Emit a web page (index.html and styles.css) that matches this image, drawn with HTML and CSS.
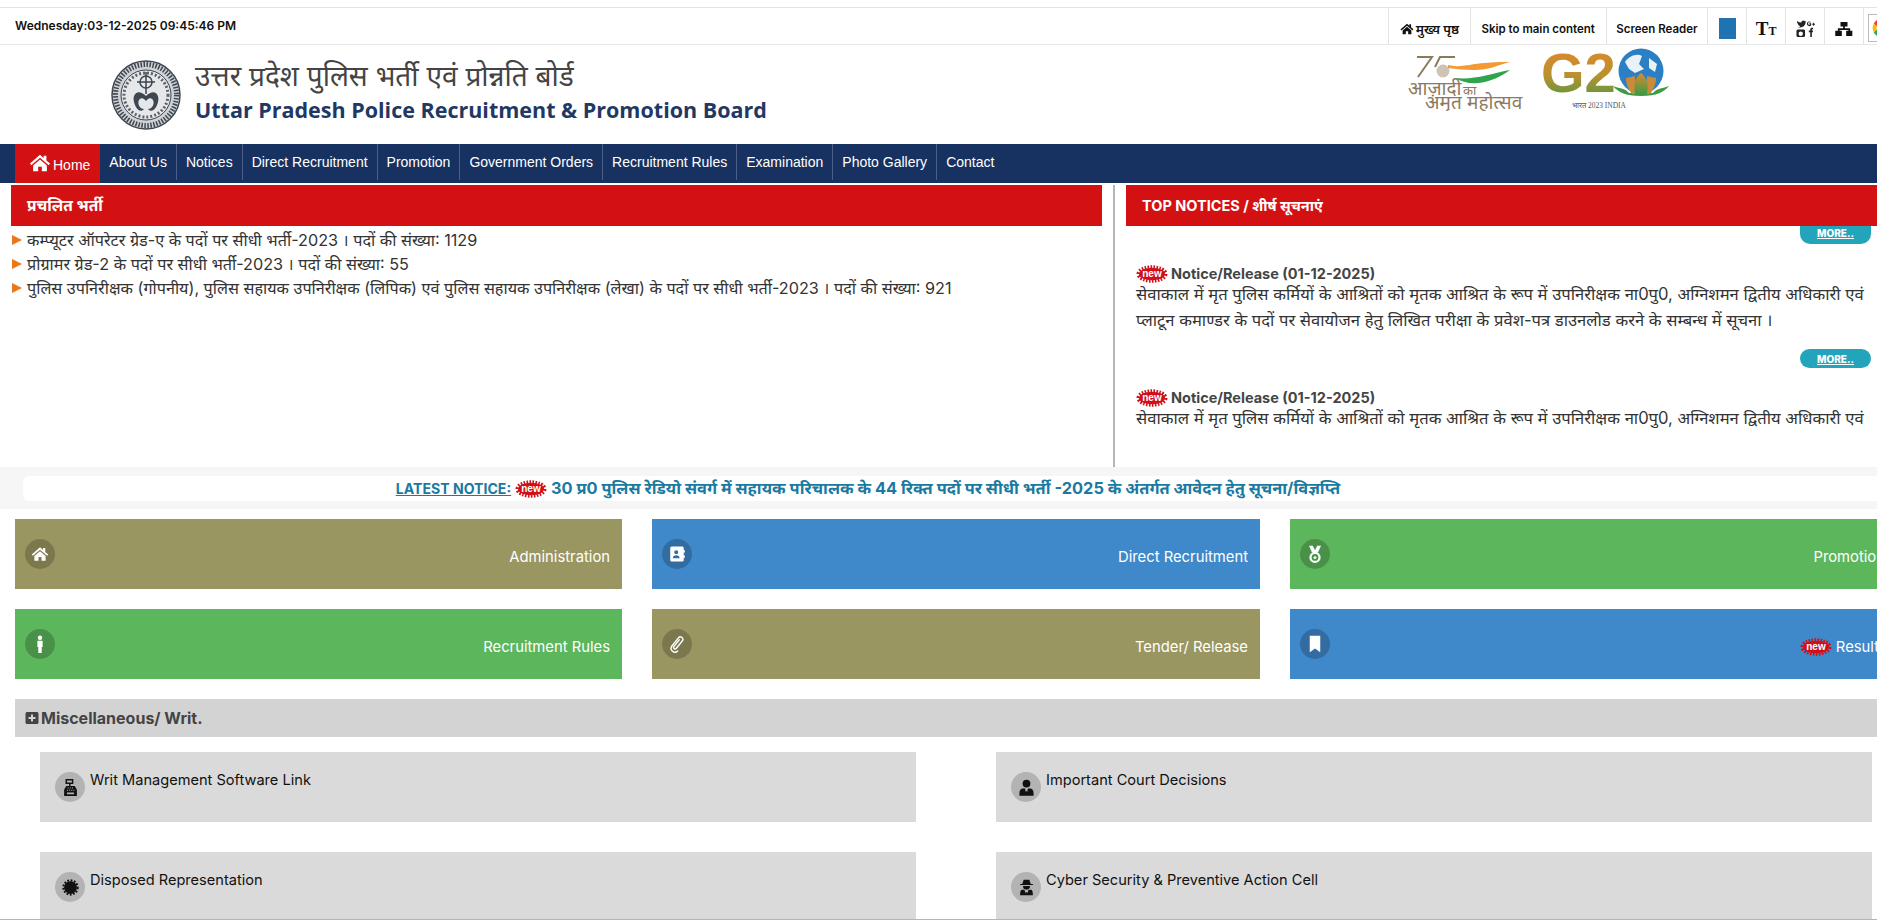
FILE: index.html
```html
<!DOCTYPE html>
<html lang="hi">
<head>
<meta charset="utf-8">
<title>UPPRPB</title>
<link rel="stylesheet" href="styles.css">
</head>
<body>
<svg class="defs" width="0" height="0" aria-hidden="true">
  <symbol id="i-home" viewBox="0 0 24 24"><path d="M12 3 1 12.6l1.5 1.8L12 6.3l9.5 8.1 1.5-1.8L19 9.2V4h-3v2.6z"/><path d="M12 8.2 4.5 14.6V21H10v-5h4v5h5.500v-6.400z"/></symbol>
  <symbol id="i-new" viewBox="0 0 32 18"><ellipse cx="16" cy="9" rx="13" ry="6.200" fill="#d01018" stroke="#d01018" stroke-width="5" stroke-dasharray="1.500 1.300"/><text x="16" y="12" text-anchor="middle" font-family="Liberation Sans, sans-serif" font-size="10" font-weight="700" fill="#fff">new</text></symbol>
  <symbol id="i-contact" viewBox="0 0 24 24"><path d="M5 2h14a2 2 0 0 1 2 2v3h1.500v3H21v4h1.500v3H21v3a2 2 0 0 1-2 2H5a2 2 0 0 1-2-2V4a2 2 0 0 1 2-2zm6 5a2.700 2.700 0 1 0 0 5.400 2.700 2.700 0 0 0 0-5.400zM6.500 17.500h9c0-2.500-2-3.800-4.500-3.800s-4.500 1.300-4.500 3.800z" fill-rule="evenodd"/></symbol>
  <symbol id="i-medal" viewBox="0 0 24 24"><path d="M4 1h5l3 6 3-6h5l-4 9H8z"/><path fill-rule="evenodd" d="M12 9a7.500 7.500 0 1 0 0 15 7.500 7.500 0 0 0 0-15zm0 3a4.500 4.500 0 1 1 0 9 4.500 4.500 0 0 1 0-9zm0 2-.8 1.700-1.900.2 1.400 1.300-.4 1.800 1.700-.9 1.700.9-.4-1.800 1.400-1.300-1.900-.2z"/></symbol>
  <symbol id="i-person" viewBox="0 0 24 24"><circle cx="12" cy="3.500" r="3"/><path d="M8.500 7.500h7v8.500h-1.200v8h-4.600v-8H8.500z"/></symbol>
  <symbol id="i-clip" viewBox="0 0 24 24"><path fill="none" stroke="#fff" stroke-width="1.900" stroke-linecap="round" d="M15 6.500 7.800 15.500a2 2 0 0 0 3.100 2.500L19 8a3.300 3.300 0 0 0-5.100-4.200L5 15a5 5 0 0 0 7.800 6.200"/></symbol>
  <symbol id="i-bookmark" viewBox="0 0 24 24"><path d="M5 1h14v22l-7-5-7 5z"/></symbol>
  <symbol id="i-register" viewBox="0 0 24 24"><path d="M5 0h11v7h-4v3h6l3 5v9H3v-9l3-5h4V7H5z"/><path fill="#b3b3b3" d="M7 2h7v3H7zM8 12h1.500v1.500H8zm3 0h1.500v1.500H11zm3 0h1.500v1.500H14zM7 15h1.500v1.500H7zm3 0h1.500v1.500H10zm3 0h1.500v1.500H13zm3 0h1.500v1.500H16zM7 19h10v2.500H7z"/></symbol>
  <symbol id="i-burst" viewBox="0 0 24 24"><circle cx="12" cy="12" r="9"/><circle cx="12" cy="12" r="10" fill="none" stroke="#111" stroke-width="3" stroke-dasharray="2.500 2.200"/></symbol>
  <symbol id="i-suit" viewBox="0 0 24 24"><circle cx="12" cy="6.500" r="5.500"/><path d="M7 13.500h3l1 5 1-2 1 2 1-5h3c3 0 5 2 5 7v3H2v-3c0-5 2-7 5-7z"/></symbol>
  <symbol id="i-spy" viewBox="0 0 24 24"><path d="M8 1h8l2 6h3v1.500H3V7h3z"/><path d="M7 10h10a5 5 0 0 1-10 0z"/><path d="M6 15h3l2 5 1-2 1 2 2-5h3c2 0 3 2 3 8H3c0-6 1-8 3-8z"/></symbol>
</svg>

<header class="topbar">
  <div class="clock">Wednesday:03-12-2025 09:45:46 PM</div>
  <ul class="toplinks">
    <li class="tl tl-home"><svg class="tl-homeicon"><use href="#i-home"/></svg>मुख्य पृष्ठ</li>
    <li class="tl tl-skip">Skip to main content</li>
    <li class="tl tl-reader">Screen Reader</li>
    <li class="tl tl-icon"><span class="swatch"></span></li>
    <li class="tl tl-icon"><span class="tt"><b class="tt-big">T</b><b class="tt-small">T</b></span></li>
    <li class="tl tl-icon">
      <svg class="social" viewBox="0 0 20 20"><path d="M1 2c1.500 1 3 1.600 4.500 1.700C6 1.500 8.500.8 9.500 2.500L11 2l-.9 1.500C10 7 7 10 1.500 8.500c1.500 0 2.500-.3 3-1C3 7 2 6 2 5 1.200 4.300 1 3 1 2z"/><path fill-rule="evenodd" d="M2 11h6a1.500 1.500 0 0 1 1.500 1.500v5A1.500 1.500 0 0 1 8 19H2a1.500 1.500 0 0 1-1.500-1.500v-5A1.500 1.500 0 0 1 2 11zm3 2.200a2 2 0 1 0 0 4.600 2 2 0 0 0 0-4.600z"/><path d="M14 2.500a2.500 2.500 0 1 0 2 4V4.500h-2v1h1c-.5 1-2.500.5-2.300-.8.100-1.300 1.500-1.500 2.300-.8l.7-.7c-.5-.5-1-.7-1.700-.7zM18 4h1v1h1v1h-1v1h-1V6h-1V5h1zM15 19v-5h-1.500v-2H15v-1c0-1.500 1-2 3-1.800v1.600c-1-.1-1.300 0-1.300.5V12h1.300l-.3 2h-1v5z"/></svg>
    </li>
    <li class="tl tl-icon">
      <svg class="sitemap" viewBox="0 0 20 16"><path d="M6 0h8v5h-3v2h6v3h2.500v6h-7v-6H15V9H5v1h2.500v6H0v-6h3V7h6V5H6z"/></svg>
    </li>
    <li class="tl tl-translate">
      <span class="gbox"><svg class="glogo" viewBox="0 0 24 24"><path fill="#ea4335" d="M12 2a10 10 0 0 1 7 2.800l-3 3A6 6 0 0 0 6.400 10L3 7.300A10 10 0 0 1 12 2z"/><path fill="#fbbc05" d="M3 7.300 6.400 10a6 6 0 0 0 0 4L3 16.700a10 10 0 0 1 0-9.400z"/><path fill="#34a853" d="M6.400 14a6 6 0 0 0 9 3l3.200 2.500A10 10 0 0 1 3 16.700z"/><path fill="#4285f4" d="M22 12c0 3-1.200 5.700-3.400 7.500L15.400 17a4.500 4.500 0 0 0 1.800-3H12v-4h9.700c.2.700.3 1.300.3 2z"/></svg></span>
    </li>
  </ul>
</header>

<section class="brand">
  <div class="brand-left">
    <svg class="emblem" viewBox="0 0 70 70">
      <circle cx="35" cy="35" r="34" fill="#cfd2d6" stroke="#3e4650" stroke-width="1.500"/>
      <circle cx="35" cy="35" r="30.500" fill="none" stroke="#3e4650" stroke-width="5" stroke-dasharray="1.500 1.500"/>
      <circle cx="35" cy="35" r="25" fill="#e6e7e9" stroke="#3e4650"/>
      <circle cx="35" cy="35" r="22" fill="none" stroke="#5a626c" stroke-width="3" stroke-dasharray="2 2"/>
      <circle cx="35" cy="22" r="6" fill="none" stroke="#3e4650" stroke-width="1.500"/>
      <path d="M35 12v22M26 22h18" stroke="#3e4650" stroke-width="1.500" fill="none"/>
      <path d="M35 36c-8-8-14-2-12 6s7 11 10 7c-4 0-7-5-5-9 2-3 5-2 7 1 2-3 5-4 7-1 2 4-1 9-5 9 3 4 8 1 10-7s-4-14-12-6z" fill="#3e4650"/>
    </svg>
    <div class="brand-text">
      <div class="brand-hi">उत्तर प्रदेश पुलिस भर्ती एवं प्रोन्नति बोर्ड</div>
      <div class="brand-en">Uttar Pradesh Police Recruitment &amp; Promotion Board</div>
    </div>
  </div>
  <div class="brand-right">
    <svg class="azadi" viewBox="0 0 118 60">
      <path d="M9 6h15L10 26M27 16 32 6h15" fill="none" stroke="#8b7a5e" stroke-width="2"/>
      <circle cx="35" cy="20" r="6.500" fill="#cfc3b4"/>
      <path d="M40 14c14 4 26-4 62-3-12 3-20 8-36 8-10 0-18-1-26-2z" fill="#f39a33"/>
      <path d="M47 27c20 2 34-4 55-8-8 6-20 12-32 13-8 1-16-1-23-5z" fill="#2ea44f"/>
      <text x="0" y="44" class="azadi-big">आज़ादी</text><text x="55" y="44" class="azadi-small">का</text>
      <text x="17" y="58" class="azadi-big">अमृत महोत्सव</text>
    </svg>
    <svg class="gtwenty" viewBox="0 0 130 66">
      <defs>
        <linearGradient id="g2" x1="0" y1="0" x2="0" y2="1"><stop offset="0" stop-color="#e8852a"/><stop offset=".55" stop-color="#b9912f"/><stop offset="1" stop-color="#3f9a46"/></linearGradient>
        <linearGradient id="lotus" x1="0" y1="0" x2="0" y2="1"><stop offset="0" stop-color="#e08a2e"/><stop offset="1" stop-color="#3f9a46"/></linearGradient>
      </defs>
      <text x="0" y="44" class="g2-text" fill="url(#g2)">G2</text>
      <circle cx="100" cy="23" r="22.500" fill="#2b80c5"/>
      <path d="M84 14c4-6 12-9 17-6l-3 8 5 5-9 4-6-4zM108 10l8 6-2 8-6-4z" fill="#e9f2f8"/>
      <path d="M72 38c8 3 12 2 16 7h24c4-5 8-4 16-7-5 6-12 10-28 10s-23-4-28-10z" fill="#3f9a46"/>
      <path d="M85 30l9-2 1 18h-4c-3-4-6-9-6-16zM115 30l-9-2-1 18h4c3-4 6-9 6-16z" fill="#c98a3a"/>
      <path d="M100 25c5 4 8 10 6 21h-12c-2-11 1-17 6-21z" fill="url(#lotus)"/>
      <text x="31" y="60" class="g2-small">भारत 2023 INDIA</text>
    </svg>
  </div>
</section>

<nav class="mainnav">
  <a class="nav-item nav-home"><svg class="nav-homeicon"><use href="#i-home"/></svg>Home</a>
  <a class="nav-item">About Us</a>
  <a class="nav-item">Notices</a>
  <a class="nav-item">Direct Recruitment</a>
  <a class="nav-item">Promotion</a>
  <a class="nav-item">Government Orders</a>
  <a class="nav-item">Recruitment Rules</a>
  <a class="nav-item">Examination</a>
  <a class="nav-item">Photo Gallery</a>
  <a class="nav-item nav-last">Contact</a>
</nav>

<section class="panels">
  <div class="panel-left">
    <h2 class="panel-title panel-title-hi">प्रचलित भर्ती</h2>
    <ul class="recruit">
      <li>कम्प्यूटर ऑपरेटर ग्रेड-ए के पदों पर सीधी भर्ती-2023 । पदों की संख्या: 1129</li>
      <li>प्रोग्रामर ग्रेड-2 के पदों पर सीधी भर्ती-2023 । पदों की संख्या: 55</li>
      <li>पुलिस उपनिरीक्षक (गोपनीय), पुलिस सहायक उपनिरीक्षक (लिपिक) एवं पुलिस सहायक उपनिरीक्षक (लेखा) के पदों पर सीधी भर्ती-2023 । पदों की संख्या: 921</li>
    </ul>
  </div>
  <div class="panel-right">
    <h2 class="panel-title">TOP NOTICES / शीर्ष सूचनाएं</h2>
    <div class="notices">
      <div class="more-row more-first"><a class="more">MORE..</a></div>
      <article class="notice">
        <h3 class="notice-head"><svg class="new-badge"><use href="#i-new"/></svg>Notice/Release (01-12-2025)</h3>
        <p class="notice-body">सेवाकाल में मृत पुलिस कर्मियों के आश्रितों को मृतक आश्रित के रूप में उपनिरीक्षक ना0पु0, अग्निशमन द्वितीय अधिकारी एवं<br>प्लाटून कमाण्डर के पदों पर सेवायोजन हेतु लिखित परीक्षा के प्रवेश-पत्र डाउनलोड करने के सम्बन्ध में सूचना ।</p>
      </article>
      <div class="more-row"><a class="more">MORE..</a></div>
      <article class="notice">
        <h3 class="notice-head"><svg class="new-badge"><use href="#i-new"/></svg>Notice/Release (01-12-2025)</h3>
        <p class="notice-body">सेवाकाल में मृत पुलिस कर्मियों के आश्रितों को मृतक आश्रित के रूप में उपनिरीक्षक ना0पु0, अग्निशमन द्वितीय अधिकारी एवं<br>प्लाटून कमाण्डर के पदों पर सेवायोजन हेतु लिखित परीक्षा के प्रवेश-पत्र डाउनलोड करने के सम्बन्ध में सूचना ।</p>
      </article>
    </div>
  </div>
</section>

<section class="latest">
  <div class="latest-inner"><a class="latest-label">LATEST NOTICE:</a> <svg class="new-badge latest-badge"><use href="#i-new"/></svg> 30 प्र0 पुलिस रेडियो संवर्ग में सहायक परिचालक के 44 रिक्त पदों पर सीधी भर्ती -2025 के अंतर्गत आवेदन हेतु सूचना/विज्ञप्ति</div>
</section>

<section class="tiles">
  <a class="tile olive"><span class="tile-ico"><svg><use href="#i-home"/></svg></span><span class="tile-text">Administration</span></a>
  <a class="tile blue"><span class="tile-ico"><svg><use href="#i-contact"/></svg></span><span class="tile-text">Direct Recruitment</span></a>
  <a class="tile green"><span class="tile-ico"><svg><use href="#i-medal"/></svg></span><span class="tile-text">Promotion</span></a>
  <a class="tile green"><span class="tile-ico"><svg><use href="#i-person"/></svg></span><span class="tile-text">Recruitment Rules</span></a>
  <a class="tile olive"><span class="tile-ico"><svg><use href="#i-clip"/></svg></span><span class="tile-text">Tender/ Release</span></a>
  <a class="tile blue"><span class="tile-ico"><svg><use href="#i-bookmark"/></svg></span><span class="tile-text tile-result"><svg class="new-badge tile-badge"><use href="#i-new"/></svg>Result</span></a>
</section>

<section class="misc">
  <h2 class="misc-head"><svg class="plus" viewBox="0 0 14 14"><path fill-rule="evenodd" d="M2 1h10a1.500 1.500 0 0 1 1.500 1.500v9A1.500 1.500 0 0 1 12 13H2a1.500 1.500 0 0 1-1.500-1.500v-9A1.500 1.500 0 0 1 2 1zm4 2.500V6H3.500v2H6v2.500h2V8h2.500V6H8V3.500z"/></svg>Miscellaneous/ Writ.</h2>
  <div class="misc-grid">
    <a class="misc-card"><span class="misc-ico"><svg><use href="#i-register"/></svg></span><span class="misc-text">Writ Management Software Link</span></a>
    <a class="misc-card"><span class="misc-ico"><svg><use href="#i-suit"/></svg></span><span class="misc-text">Important Court Decisions</span></a>
    <a class="misc-card"><span class="misc-ico"><svg><use href="#i-burst"/></svg></span><span class="misc-text">Disposed Representation</span></a>
    <a class="misc-card"><span class="misc-ico"><svg><use href="#i-spy"/></svg></span><span class="misc-text">Cyber Security &amp; Preventive Action Cell</span></a>
  </div>
</section>
</body>
</html>
```
FILE: styles.css
```css
* { box-sizing: border-box; }
html { overflow: hidden; height: 100%; }
body {
  margin: 0;
  width: 1877px;
  height: 920px;
  overflow: hidden;
  background: #fff;
  color: #111;
  font-family: Inter, "Noto Sans", "Noto Sans Devanagari", sans-serif;
  font-size: 14px;
  padding-top: 7px;
  border-bottom: 1px solid #b5b5b5;
}
.defs { position: absolute; }
ul { list-style: none; margin: 0; padding: 0; }
h2, h3, p { margin: 0; }

/* top bar */
.topbar {
  display: flex;
  justify-content: space-between;
  height: 38px;
  border-top: 1px solid #e3e3e3;
  border-bottom: 1px solid #e8e8e8;
}
.clock { padding-left: 15px; font-size: 12px; font-weight: 600; line-height: 35px; white-space: nowrap; }
.toplinks { display: flex; width: 489px; flex: none; }
.tl {
  display: flex;
  align-items: center;
  justify-content: center;
  padding-top: 5px;
  border-left: 1px solid #e3e3e3;
  font-size: 11.500px;
  font-weight: 600;
  white-space: nowrap;
}
.tl-home { width: 82px; font-size: 13px; }
.tl-skip { width: 136px; }
.tl-reader { width: 102px; }
.tl-icon { width: 39px; }
.tl-translate { width: 14px; justify-content: flex-start; padding-left: 4px; }
.tl-homeicon { width: 14px; height: 14px; margin-right: 2px; fill: #111; }
.swatch { width: 17px; height: 21px; background: #1f73b0; }
.tt { font-family: "Liberation Serif", serif; color: #111; line-height: 1; }
.tt-big { font-size: 19px; }
.tt-small { font-size: 12px; }
.social { width: 19px; height: 19px; fill: #222; }
.sitemap { width: 18px; height: 14px; fill: #111; }
.gbox { display: flex; align-items: center; height: 28px; width: 40px; flex: none; border: 1px solid #bbb; padding-left: 2px; margin-top: -1px; }
.glogo { width: 22px; height: 22px; flex: none; }

/* brand */
.brand {
  display: flex;
  justify-content: space-between;
  height: 99px;
}
.brand-left { display: flex; padding: 15px 0 0 111px; }
.emblem { width: 70px; height: 70px; flex: none; }
.brand-text { margin-left: 14px; }
.brand-hi { font-size: 28px; line-height: 36px; color: #444; margin-top: -2px; white-space: nowrap; }
.brand-en { font-family: "Open Sans", sans-serif; font-size: 21.500px; font-weight: 700; line-height: 28px; color: #1f3864; margin-top: 2px; white-space: nowrap; }
.brand-right { display: flex; gap: 15px; width: 469px; flex: none; padding-top: 3px; align-items: flex-start; }
.azadi { width: 118px; height: 60px; margin-top: 3px; flex: none; }
.azadi-big { font-size: 19px; fill: #8b7a5e; }
.azadi-small { font-size: 13px; fill: #8b7a5e; }
.gtwenty { width: 130px; height: 66px; flex: none; }
.g2-text { font-size: 56px; font-weight: 700; font-family: "Liberation Sans", sans-serif; }
.g2-small { font-size: 7.500px; fill: #555; font-family: "Liberation Serif", serif; }

/* nav */
.mainnav {
  display: flex;
  height: 39px;
  padding-left: 15px;
  background: #173161;
  font-family: "Liberation Sans", sans-serif;
  font-size: 14px;
  color: #fff;
}
.nav-item { display: flex; align-items: center; padding: 0 9px; border-right: 1px solid #4a6088; white-space: nowrap; margin-bottom: 3px; }
.nav-last { border-right: 0; }
.nav-home { background: #d41112; padding: 2px 10px 0 14px; margin-bottom: 0; border-right: 0; }
.nav-homeicon { width: 22px; height: 22px; fill: #fff; margin-right: 2px; margin-top: -4px; }

/* panels */
.panels { display: flex; height: 284px; padding-top: 2px; overflow: hidden; }
.panel-left { width: 1113px; flex: none; padding-left: 11px; }
.panel-right { flex: 1; min-width: 0; padding-left: 11px; border-left: 2px solid #b5b5b5; overflow: hidden; }
.panel-left .panel-title { width: 1091px; }
.panel-right .panel-title { width: 800px; }
.panel-title {
  height: 41px;
  padding-left: 16px;
  background: #d41112;
  color: #fff;
  font-size: 14.500px;
  font-weight: 700;
  line-height: 42px;
  white-space: nowrap;
}
.panel-title-hi { font-size: 15.500px; }
.recruit { padding-top: 2px; }
.recruit li {
  position: relative;
  padding-left: 16px;
  font-size: 16.200px;
  line-height: 24px;
  color: #333;
  white-space: nowrap;
}
.recruit li::before {
  content: "";
  position: absolute;
  left: 1px;
  top: 7px;
  border-left: 10px solid #e8781a;
  border-top: 5.500px solid transparent;
  border-bottom: 5.500px solid transparent;
}
.notices { width: 745px; height: 208px; overflow: hidden; }
.more-row { display: flex; justify-content: flex-end; height: 19px; }
.more-first { height: 18px; align-items: flex-end; }
.more {
  display: flex;
  align-items: center;
  justify-content: center;
  width: 71px;
  height: 19px;
  background: #22a5bb;
  color: #fff;
  font-size: 10px;
  font-weight: 800;
  text-decoration: underline;
  border-radius: 10px;
}
.more-first .more { height: 18px; border-radius: 0 0 10px 10px; padding-bottom: 5px; }
.notice { padding: 20px 0 0 10px; height: 105px; }
.notice-head { display: flex; align-items: center; font-size: 14.500px; font-weight: 700; color: #444; line-height: 20px; white-space: nowrap; }
.new-badge { width: 32px; height: 18px; margin-right: 3px; flex: none; }
.notice-body { margin-top: -3px; font-size: 16.600px; line-height: 26px; color: #333; white-space: nowrap; }

/* latest */
.latest { height: 42px; background: #f6f6f6; padding: 9px 0 8px 23px; }
.latest-inner {
  height: 25px;
  background: #fff;
  border-radius: 6px 0 0 6px;
  padding-right: 164px;
  text-align: center;
  font-size: 16.400px;
  font-weight: 700;
  line-height: 24px;
  color: #1b7a9f;
  white-space: nowrap;
}
.latest-label { font-size: 14.100px; text-decoration: underline; }
.latest-badge { vertical-align: -4px; margin: 0; }

/* tiles */
.tiles {
  display: grid;
  grid-template-columns: 607px 608px 607px;
  column-gap: 30px;
  row-gap: 20px;
  padding: 10px 0 0 15px;
  width: 1930px;
}
.tile { display: flex; justify-content: space-between; height: 70px; padding: 20px 12px 0 10px; color: #fff; }
.olive { background: #9a9662; }
.blue { background: #3f88c9; }
.green { background: #5cb65c; }
.tile-ico { display: flex; align-items: center; justify-content: center; width: 30px; height: 30px; border-radius: 50%; background: rgba(0,0,0,.2); }
.tile-ico svg { width: 18px; height: 18px; fill: #fff; }
.tile-text { display: flex; align-items: center; height: 36px; font-size: 14.800px; font-weight: 400; }
.tile-result { padding-right: 6px; }
.tile-badge { margin-right: 4px; }

/* misc */
.misc { padding: 20px 0 0 15px; }
.misc-head {
  display: flex;
  align-items: center;
  height: 38px;
  padding-left: 10px;
  background: #d3d3d3;
  color: #444;
  font-size: 16px;
  font-weight: 700;
}
.plus { width: 14px; height: 14px; margin-right: 2px; fill: #444; }
.misc-grid {
  display: grid;
  grid-template-columns: repeat(2, 876px);
  column-gap: 80px;
  row-gap: 30px;
  padding: 15px 0 0 25px;
}
.misc-card { display: flex; height: 70px; padding: 20px 0 0 15px; background: #dadada; color: #111; }
.misc-ico { display: flex; align-items: center; justify-content: center; width: 30px; height: 30px; border-radius: 50%; background: #b3b3b3; margin-right: 5px; flex: none; }
.misc-ico svg { width: 17px; height: 17px; fill: #111; }
.misc-text { font-size: 14.600px; font-weight: 400; line-height: 16px; }
```
